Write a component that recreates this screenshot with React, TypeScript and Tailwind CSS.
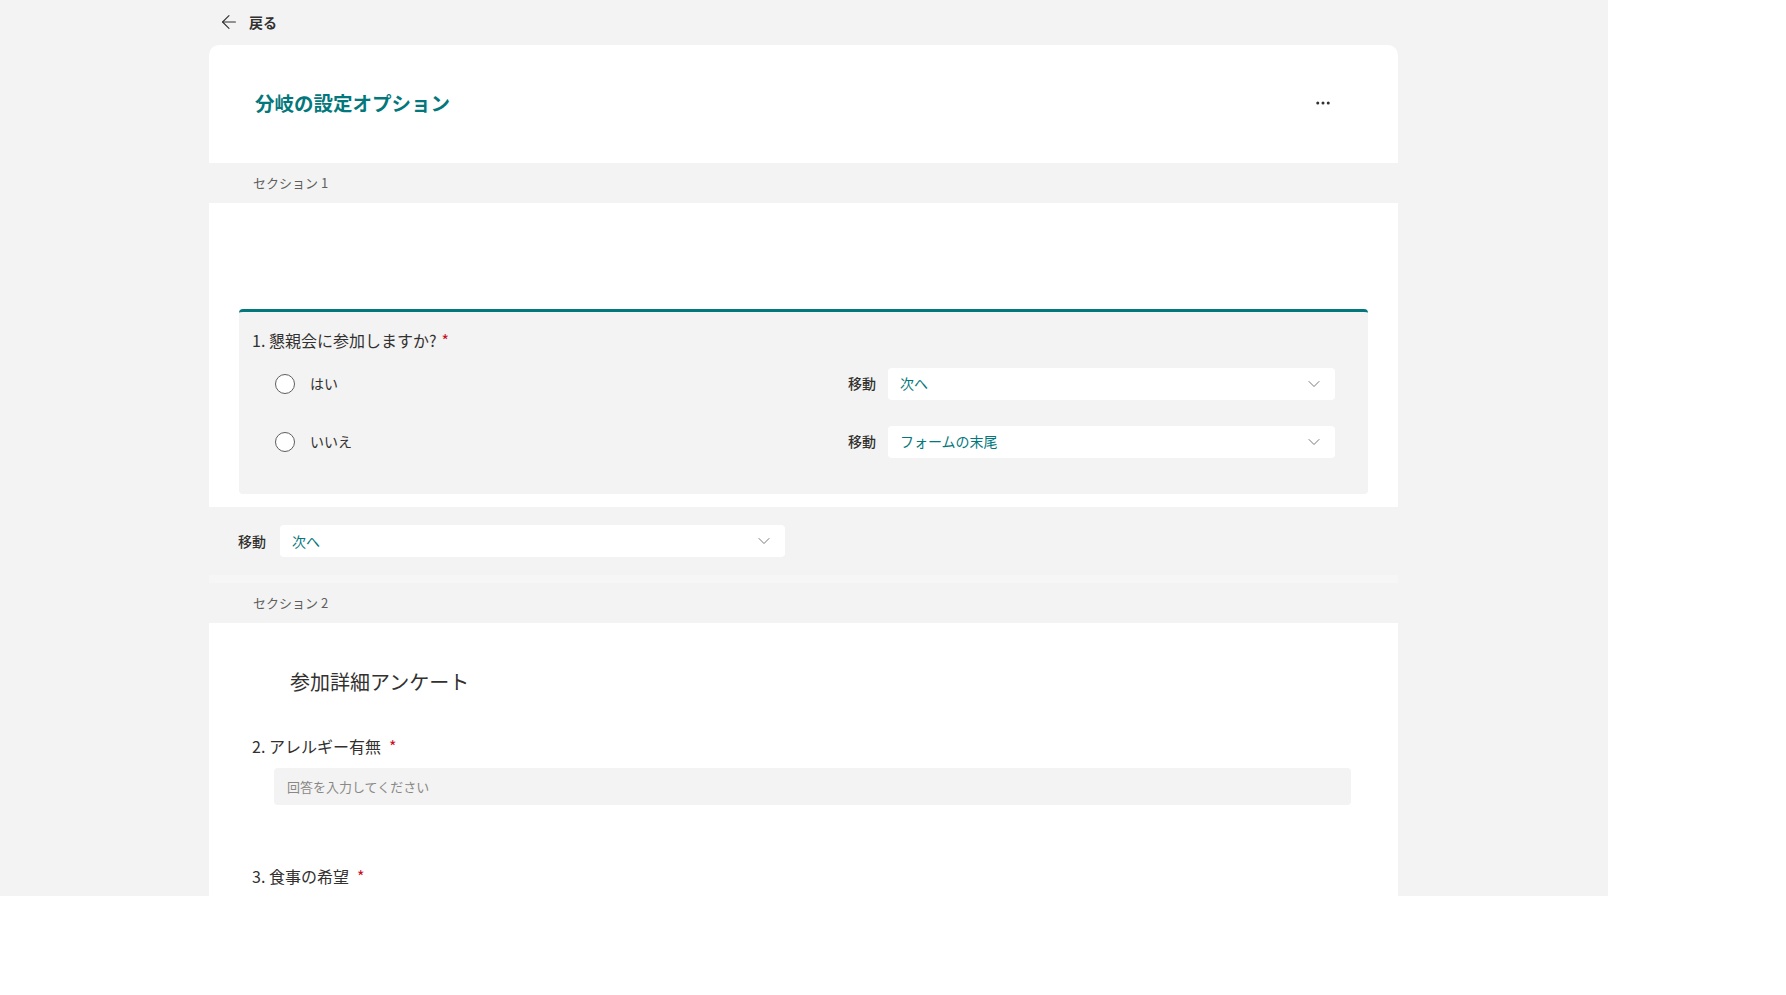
import { ArrowLeft, ChevronDown, MoreHorizontal } from "lucide-react"

const font = { fontFamily: '"Noto Sans CJK JP", "Noto Sans", sans-serif' }

function Jump({ value, width, gap }: { value: string; width: string; gap: string }) {
  return (
    <div className={`flex items-center ${gap}`}>
      <span className="text-[14px] font-medium text-[#323130]">移動</span>
      <div className={`flex h-[32px] ${width} items-center justify-between rounded-[4px] bg-white pl-[12px] pr-[11px]`}>
        <span className="text-[14px] text-[#03787c]">{value}</span>
        <ChevronDown size={20} strokeWidth={1} className="text-[#605e5c]" />
      </div>
    </div>
  )
}

function Choice({ label, value }: { label: string; value: string }) {
  return (
    <div className="flex h-[33px] items-center justify-between">
      <div className="flex items-center">
        <div className="ml-[1px] h-[20px] w-[20px] rounded-full border border-[#605e5c] bg-white" />
        <span className="ml-[15px] text-[14px] text-[#323130]">{label}</span>
      </div>
      <Jump value={value} width="w-[447px]" gap="gap-[12px]" />
    </div>
  )
}

function SectionBand({ label }: { label: string }) {
  return (
    <div className="flex h-[40px] items-center bg-[#f3f3f3] pl-[44px] text-[13px] text-[#605e5c]">{label}</div>
  )
}

export default function App() {
  return (
    <div style={font} className="h-[896px] w-[1608px] overflow-hidden bg-[#f3f3f3]">
      <div className="flex h-[45px] items-center pl-[218px] pb-[1px]">
        <ArrowLeft size={22} strokeWidth={1.2} className="text-[#323130]" />
        <span className="ml-[9px] text-[14px] font-bold text-[#323130]">戻る</span>
      </div>

      <div className="ml-[209px] w-[1189px] rounded-t-[10px] bg-white">
        <div className="flex h-[118px] items-center justify-between pl-[46px] pr-[66px] pb-[2px]">
          <h1 className="text-[19.5px] font-bold text-[#03787c]">分岐の設定オプション</h1>
          <MoreHorizontal size={18} strokeWidth={2} className="text-[#323130]" />
        </div>

        <SectionBand label="セクション 1" />

        <div className="px-[30px] pt-[106px] pb-[13px]">
          <div className="h-[185px] rounded-[4px] border-t-[3px] border-[#03787c] bg-[#f3f3f3] pl-[13px] pr-[33px]">
            <div className="flex h-[55px] items-center text-[16px] text-[#323130]">
              1. 懇親会に参加しますか?<span className="ml-[5px] text-[#c50f1f]">*</span>
            </div>
            <div className="flex flex-col gap-[25px] pl-[22px]">
              <Choice label="はい" value="次へ" />
              <Choice label="いいえ" value="フォームの末尾" />
            </div>
          </div>
        </div>

        <div className="flex h-[68px] items-center bg-[#f3f3f3] pl-[29px]">
          <Jump value="次へ" width="w-[505px]" gap="gap-[14px]" />
        </div>
        <div className="h-[8px] bg-[#f6f6f6]" />

        <SectionBand label="セクション 2" />

        <div className="pl-[43px] pr-[47px] pb-[40px]">
          <div className="flex h-[111px] items-center pt-[7px] pl-[38px] text-[20px] text-[#323130]">参加詳細アンケート</div>
          <div className="flex h-[24px] items-center text-[16px] text-[#323130]">
            2. アレルギー有無<span className="ml-2 text-[#c50f1f]">*</span>
          </div>
          <div className="ml-[22px] mt-[10px] flex h-[37px] items-center rounded-[4px] bg-[#f3f3f3] pl-[13px] text-[13px] text-[#8a8886]">
            回答を入力してください
          </div>
          <div className="mt-[59px] flex h-[24px] items-center text-[16px] text-[#323130]">
            3. 食事の希望<span className="ml-2 text-[#c50f1f]">*</span>
          </div>
        </div>
      </div>
    </div>
  )
}
